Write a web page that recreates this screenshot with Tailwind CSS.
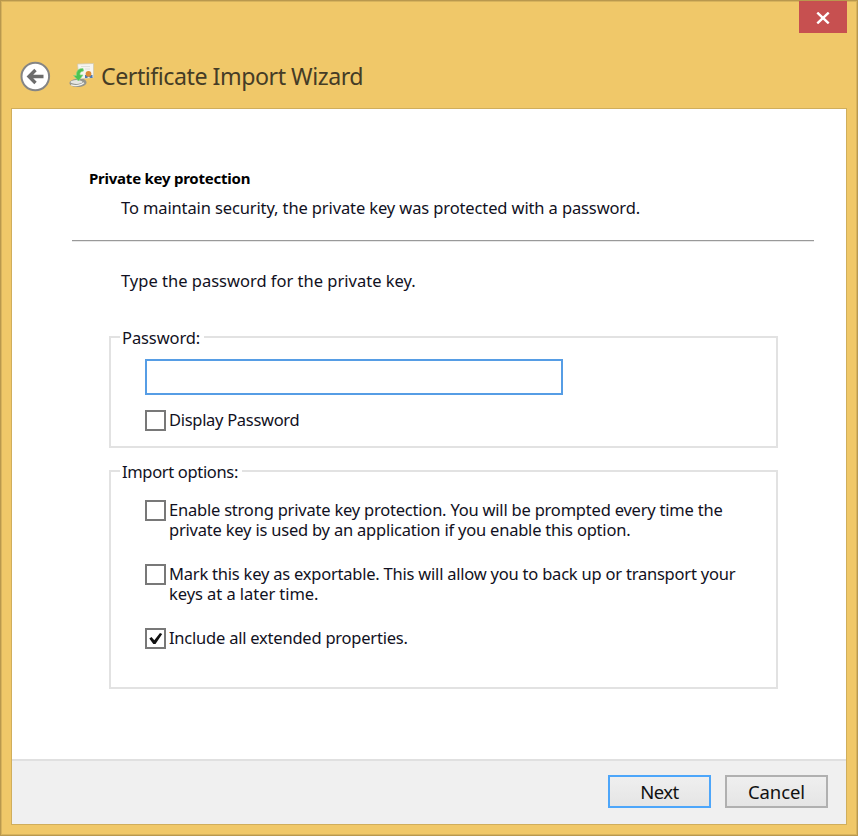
<!DOCTYPE html>
<html lang="en">
<head>
<meta charset="utf-8">
<title>Certificate Import Wizard</title>
<script src="https://cdn.jsdelivr.net/npm/@tailwindcss/browser@4"></script>
</head>
<body class="w-[858px] h-[836px] overflow-hidden">
<div class="w-[858px] h-[836px] flex flex-col bg-[#f0c869] border border-[#b9984e] shadow-[inset_0_0_0_1px_#d7b35d] px-[10px] pb-[10px] font-['Noto_Sans','Open_Sans',sans-serif] text-[16.5px] leading-[20px] text-[#111122] whitespace-nowrap">
  <header class="h-[107px] shrink-0 flex flex-col">
    <div class="h-[32px] shrink-0 flex justify-end">
      <button class="w-[48px] h-[32px] bg-[#c75050] flex items-center justify-center" aria-label="Close">
        <svg class="w-[14px] h-[12px] mt-[2px]" viewBox="0 0 14 12" fill="none" stroke="#fff" stroke-width="2.4"><path d="M1.3 .6 12.7 11.4M12.7 .6 1.3 11.4"/></svg>
      </button>
    </div>
    <div class="h-[75px] flex items-center pt-[12px] pl-[9px]">
      <svg class="w-[31px] h-[31px]" viewBox="0 0 31 31" fill="none"><circle cx="15.3" cy="15.5" r="13.8" fill="#fff" stroke="#858585" stroke-width="2"/><path d="M23.5 15.5H9M15.5 9 9 15.5l6.5 6.5" stroke="#6c6c6c" stroke-width="3.4"/></svg>
      <svg class="w-[26px] h-[26px] ml-[18px] -mt-[3px]" viewBox="0 0 26 26">
        <path d="M8.500 2 24.500 1.500v14L10 17z" fill="#f6f5f0" stroke="#d2c9ac" stroke-width=".8"/>
        <path d="M12 4.500h9M16 7h5" stroke="#e0e0da" stroke-width="1"/>
        <path d="M16 13h7.500v3h-2l-2-1.500-1.500 1.500h-2z" fill="#4a78b5"/>
        <circle cx="19.500" cy="11.800" r="2.900" fill="#dc8d36"/>
        <path d="M.5 21c0-2 3-3.500 6-4h8c2 1 3 2 3 3.500 0 2.500-4 4.500-9 4.500-4 0-8-1.500-8-4z" fill="#94968f"/>
        <ellipse cx="7.500" cy="20" rx="6" ry="1.900" fill="#e6e7e2"/>
        <path d="M2 22.800c4 1.300 10 1 13-2" stroke="#f1f1ec" stroke-width="1.300" fill="none"/>
        <path d="M14 6.500C9.500 6 7 9.500 7.500 13.500H4.500l5 5.500 4.500-6h-3c-.5-2.500 1-3.500 3.500-4z" fill="#4bc452" stroke="#8bd684" stroke-width=".7"/>
      </svg>
      <h1 class="ml-[6px] -mt-[2px] text-[23.2px] leading-[30px] tracking-[-0.47px] text-[#453c26]">Certificate Import Wizard</h1>
    </div>
  </header>
  <main class="flex-1 min-h-0 flex flex-col bg-white border border-[#d0ae5c]">
    <section class="h-[650px] shrink-0 flex flex-col pl-[60px] pr-[31px] pt-[59px]">
      <h2 class="pl-[17px] text-[15px] font-bold tracking-[-0.24px] text-black">Private key protection</h2>
      <p class="pl-[49px] mt-[10px] tracking-[-0.12px]">To maintain security, the private key was protected with a password.</p>
      <div class="w-[742px] h-[2px] mt-[22px] border-t border-[#999] bg-[#e8e8e8]"></div>
      <p class="pl-[49px] mt-[29px]">Type the password for the private key.</p>
      <fieldset class="ml-[37px] mt-[36px] w-[669px] h-[121px] border-2 border-[#e2e2e2] pl-[34px]">
        <legend class="-ml-[25px] pl-[2px] pr-[4px] h-[20px] leading-[22px] tracking-[-0.1px]">Password:</legend>
        <input type="password" aria-label="Password" class="block mt-[12px] w-[418px] h-[36px] border-2 border-[#569de5] bg-white outline-none">
        <label class="flex mt-[15px] h-[21px] tracking-[-0.3px]"><span class="w-[21px] h-[21px] border-2 border-[#787878] mr-[3px]"></span><span>Display Password</span></label>
      </fieldset>
      <fieldset class="ml-[37px] mt-[13px] w-[669px] h-[228px] border-2 border-[#e2e2e2] pl-[34px]">
        <legend class="-ml-[25px] pl-[2px] pr-[4px] h-[20px] leading-[22px] tracking-[-0.34px]">Import options:</legend>
        <label class="flex mt-[19px] h-[64px]"><span class="w-[21px] h-[21px] border-2 border-[#787878] mr-[3px]"></span><span class="tracking-[-0.21px]">Enable strong private key protection. You will be prompted every time the<br>private key is used by an application if you enable this option.</span></label>
        <label class="flex h-[64px]"><span class="w-[21px] h-[21px] border-2 border-[#787878] mr-[3px]"></span><span class="tracking-[-0.22px]">Mark this key as exportable. This will allow you to back up or transport your<br><span class="tracking-[-0.06px]">keys at a later time.</span></span></label>
        <label class="flex h-[21px]"><span class="w-[21px] h-[21px] border-2 border-[#787878] mr-[3px]"><svg class="w-[17px] h-[17px]" viewBox="0 0 17 17"><path d="M2.300 8.500 4.500 7l2.800 3.200L13 3l2.200 1-6.700 10H6.300z" fill="#111"/></svg></span><span class="tracking-[-0.22px]">Include all extended properties.</span></label>
      </fieldset>
    </section>
    <footer class="flex-1 flex justify-end items-start gap-[14px] bg-[#f0f0f0] border-t-2 border-[#e0e0e0] pt-[14px] pr-[18px] text-[18.5px] text-[#111]">
      <button class="w-[103px] h-[33px] border-2 border-[#4da6fa] bg-linear-to-b from-[#efefef] to-[#e5e5e5] tracking-[-0.5px]">Next</button>
      <button class="w-[103px] h-[33px] border-2 border-[#b0b0b0] bg-linear-to-b from-[#efefef] to-[#e5e5e5] tracking-[-0.1px]">Cancel</button>
    </footer>
  </main>
</div>
</body>
</html>
